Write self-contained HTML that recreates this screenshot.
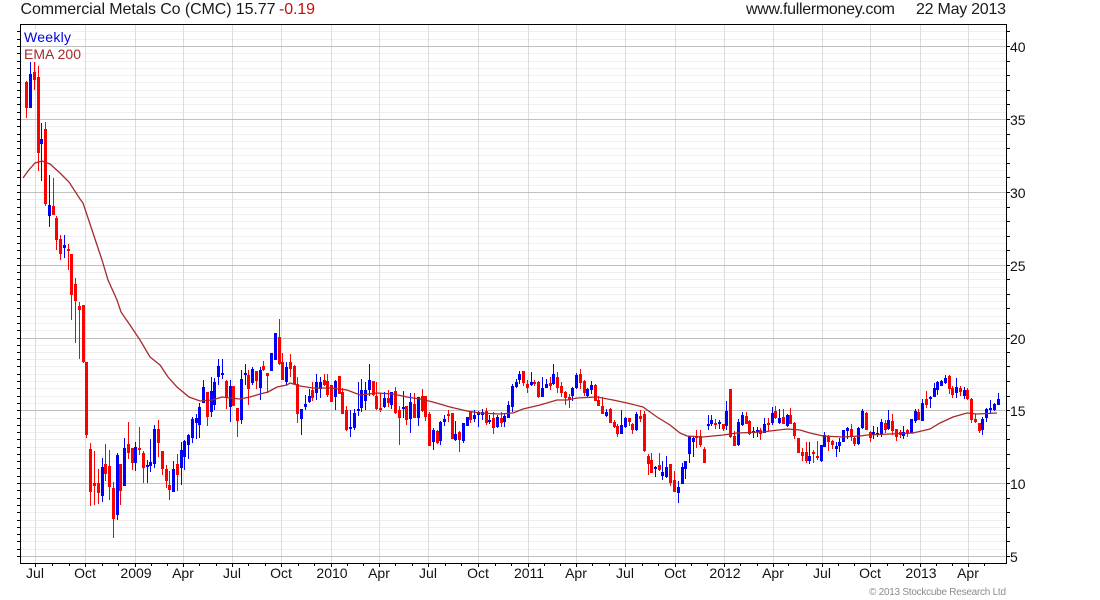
<!DOCTYPE html>
<html lang="en">
<head>
<meta charset="utf-8">
<title>Commercial Metals Co (CMC)</title>
<style>
html,body{margin:0;padding:0;background:#fff;width:1100px;height:600px;overflow:hidden}
svg{display:block;font-family:"Liberation Sans",Arial,sans-serif}
</style>
</head>
<body>
<svg width="1100" height="600" viewBox="0 0 1100 600" xmlns="http://www.w3.org/2000/svg">
<!-- grid -->
<g shape-rendering="crispEdges" fill="none" transform="translate(0,.5)">
<path stroke="#efefef" d="M21 549H1006M21 541H1006M21 534H1006M21 527H1006M21 520H1006M21 512H1006M21 505H1006M21 498H1006M21 490H1006M21 476H1006M21 468H1006M21 461H1006M21 454H1006M21 447H1006M21 439H1006M21 432H1006M21 425H1006M21 418H1006M21 403H1006M21 396H1006M21 388H1006M21 381H1006M21 374H1006M21 366H1006M21 359H1006M21 352H1006M21 345H1006M21 330H1006M21 323H1006M21 316H1006M21 308H1006M21 301H1006M21 294H1006M21 287H1006M21 279H1006M21 272H1006M21 258H1006M21 250H1006M21 243H1006M21 236H1006M21 228H1006M21 221H1006M21 214H1006M21 207H1006M21 199H1006M21 185H1006M21 177H1006M21 170H1006M21 163H1006M21 155H1006M21 148H1006M21 141H1006M21 134H1006M21 126H1006M21 112H1006M21 104H1006M21 97H1006M21 90H1006M21 82H1006M21 75H1006M21 68H1006M21 61H1006M21 53H1006M21 39H1006M21 31H1006"/>
</g>
<g shape-rendering="crispEdges" fill="none" transform="translate(.5,0)">
<path stroke="#dcdcdc" d="M35 25V563M85 25V563M135 25V563M183 25V563M232 25V563M281 25V563M331 25V563M379 25V563M428 25V563M478 25V563M528 25V563M576 25V563M625 25V563M675 25V563M724 25V563M773 25V563M822 25V563M870 25V563M920 25V563M968 25V563"/>
</g>
<g shape-rendering="crispEdges" fill="none" transform="translate(0,.5)">
<path stroke="#c0c0c0" d="M21 556H1006M21 483H1006M21 410H1006M21 338H1006M21 265H1006M21 192H1006M21 119H1006M21 46H1006"/>
</g>
<!-- legend backgrounds -->
<rect x="21" y="29" width="52" height="16" fill="#fff"/>
<rect x="21" y="47" width="61" height="15" fill="#fff"/>
<!-- candles -->
<g shape-rendering="crispEdges" fill="none" transform="translate(.5,0)">
<path stroke="#ff0000" stroke-width="1" d="M26 81V118M34 62V90M38 66V171M45 122V206M53 178V215M56 216V250M60 235V260M68 244V270M71 254V320M75 278V343M79 302V359M83 305V363M86 362V438M90 443V506M94 451V505M98 469V504M105 444V481M109 450V500M113 482V538M120 464V505M128 422V459M132 448V470M139 427V455M143 451V483M158 420V457M162 451V475M166 465V488M169 471V500M177 454V491M207 392V426M226 380V409M233 386V406M237 408V437M248 370V405M256 371V389M263 361V371M267 373V393M279 319V365M282 353V380M290 354V377M294 365V385M297 377V423M312 382V401M324 374V386M327 374V397M331 385V402M339 376V394M342 388V414M346 406V431M373 381V396M376 382V410M380 393V412M388 390V407M395 387V414M399 406V445M406 406V425M414 393V418M422 389V412M425 396V421M429 412V446M437 430V444M448 410V422M452 413V439M459 431V452M470 411V423M486 408V425M493 412V434M501 412V427M523 371V386M527 380V393M534 380V386M538 381V398M550 377V390M557 372V393M561 382V397M565 391V405M569 394V408M580 369V389M584 380V396M595 384V401M598 396V406M602 397V414M610 408V423M614 420V428M617 424V437M629 418V426M632 423V434M640 410V422M644 411V452M648 454V475M651 453V473M659 453V471M670 464V486M674 471V492M696 430V448M700 430V447M704 447V463M715 419V429M723 424V431M730 389V438M734 431V446M746 412V424M749 420V435M760 428V440M768 418V431M775 406V419M783 409V424M790 408V424M794 422V439M798 438V453M802 448V461M806 442V463M813 450V463M817 441V460M828 435V451M832 440V449M851 424V441M854 436V446M866 412V430M870 431V442M885 420V433M892 414V435M896 429V441M900 430V438M907 429V437M918 409V420M926 391V408M949 375V394M952 386V398M960 386V396M967 388V400M971 398V423M975 414V423M979 423V433"/>
<path stroke="#ff0000" stroke-width="3" d="M26 82V108M34 72V80M38 77V153M45 129V204M53 206V215M56 218V240M60 239V254M68 249V251M71 254V295M75 284V301M79 306V310M83 305V362M86 362V435M90 449V492M94 483V486M98 483V493M105 464V474M109 466V487M113 488V519M120 464V491M128 444V453M132 448V463M139 448V450M143 453V468M158 429V443M162 451V469M166 469V481M169 485V490M177 464V475M207 392V417M226 381V397M233 386V406M237 408V421M248 375V389M256 371V381M263 366V370M267 373V376M279 337V364M282 362V380M290 362V369M294 366V384M297 384V414M312 390V398M324 380V385M327 381V395M331 385V402M339 376V394M342 392V414M346 410V430M373 381V395M376 396V409M380 408V410M388 398V403M395 391V413M399 410V418M406 406V420M414 404V418M422 396V411M425 396V417M429 414V446M437 431V443M448 414V416M452 413V439M459 432V440M470 412V420M486 411V423M493 418V428M501 418V423M523 371V383M527 384V388M534 382V384M538 382V397M550 383V386M557 377V388M561 386V393M565 392V398M569 397V400M580 374V383M584 381V393M595 385V401M598 400V406M602 406V414M610 409V423M614 422V427M617 426V434M629 418V422M632 424V430M640 416V419M644 414V451M648 456V464M651 460V473M659 465V470M670 464V483M674 480V492M696 436V438M700 436V445M704 449V463M715 423V425M723 424V429M730 389V437M734 436V446M746 416V424M749 421V434M760 430V434M768 423V425M775 411V418M783 417V424M790 415V424M794 423V436M798 438V453M802 452V456M806 452V461M813 452V454M817 456V458M828 436V442M832 441V445M851 429V437M854 438V444M866 413V430M870 432V438M885 423V430M892 421V431M896 429V437M900 432V435M907 430V433M918 412V420M926 399V405M949 376V389M952 388V395M960 388V392M967 390V399M971 399V420M975 419V422M979 423V431"/>
<path stroke="#0000ff" stroke-width="1" d="M30 62V108M41 123V181M49 175V227M64 235V258M102 458V502M117 453V520M124 438V486M135 442V471M147 460V483M150 439V472M154 425V468M173 461V492M181 442V485M184 440V470M188 434V459M192 417V443M196 414V439M199 403V438M203 380V403M211 377V417M214 378V410M218 359V385M222 359V379M230 380V422M241 370V424M245 364V385M252 367V385M260 367V400M271 353V371M275 333V360M286 362V385M301 409V435M305 395V410M309 389V403M316 374V400M320 377V398M335 380V410M350 410V437M354 409V430M358 382V416M361 379V412M365 382V410M369 364V396M384 392V408M391 392V409M403 391V418M410 393V433M418 397V426M433 428V450M440 421V445M444 415V426M455 421V441M463 423V443M467 417V426M474 410V422M478 411V427M482 409V420M489 415V424M497 415V428M504 414V427M508 401V418M512 384V412M516 379V388M519 371V384M531 372V386M542 377V397M546 379V388M553 364V385M572 387V401M576 373V389M587 388V397M591 381V394M606 409V417M621 410V434M625 417V428M636 412V431M655 466V477M662 461V480M666 456V478M678 481V503M682 463V484M685 461V479M689 436V463M693 436V457M708 415V430M711 415V426M719 420V429M726 401V430M738 419V446M742 412V426M753 427V438M757 427V437M764 418V433M772 407V425M779 409V424M787 414V427M809 442V464M821 445V462M824 432V447M836 442V457M839 438V452M843 430V442M847 427V439M858 427V445M862 409V429M873 426V439M877 427V437M881 419V437M888 410V430M903 426V439M911 419V433M915 409V423M922 399V421M930 396V408M934 383V397M937 381V395M941 380V386M945 375V384M956 378V398M964 387V399M982 417V435M986 408V422M990 400V414M994 403V411M998 393V405"/>
<path stroke="#0000ff" stroke-width="3" d="M30 74V108M41 139V144M49 205V216M64 245V248M102 467V496M117 455V515M124 448V486M135 447V463M147 465V467M150 462V466M154 429V464M173 469V492M181 450V468M184 441V457M188 435V445M192 419V438M196 418V423M199 407V425M203 387V403M211 391V412M214 382V405M218 366V377M222 373V375M230 386V407M241 379V420M245 373V375M252 369V383M260 370V388M271 353V371M275 333V360M286 367V382M301 409V419M305 404V407M309 396V402M316 382V393M320 382V389M335 381V397M350 427V429M354 413V428M358 409V411M361 390V408M365 390V401M369 380V390M384 398V407M391 392V405M403 407V409M410 402V419M418 397V418M433 430V442M440 422V441M444 419V422M455 434V440M463 423V441M467 417V426M474 415V419M478 412V415M482 412V415M489 420V422M497 417V427M504 416V422M508 405V418M512 386V407M516 382V387M519 374V380M531 382V385M542 388V397M546 384V388M553 374V384M572 388V396M576 375V388M587 389V396M591 385V390M606 412V416M621 425V434M625 418V427M636 414V430M655 467V469M662 472V476M666 467V477M678 487V493M682 467V484M685 461V469M689 436V454M693 438V442M708 424V426M711 420V424M719 422V424M726 411V426M738 422V445M742 415V425M753 431V433M757 430V432M764 424V433M772 413V423M779 418V423M787 415V426M809 456V461M821 445V461M824 435V447M836 446V449M839 442V446M843 430V442M847 428V431M858 428V444M862 411V428M873 432V435M877 433V435M881 422V434M888 420V429M903 432V436M911 419V433M915 411V421M922 403V421M930 397V399M934 388V397M937 382V390M941 381V386M945 378V383M956 387V393M964 390V396M982 419V430M986 409V418M990 408V410M994 404V410M998 399V405"/>
</g>
<!-- EMA 200 -->
<polyline fill="none" stroke="#a52a2a" stroke-width="1.3" points="23,178 28,171 35,163 42,161 50,164 60,173 69,182 80,199 83,203 92,230 102,260 108,280 117,300 121,312 130,325 140,340 150,357 160,365 168,377 177,387 189,397 200,401 212,400 222,397 230,398 240,399 250,397 260,394 268,392 277,387 287,385 290,383 300,386 313,388 330,388 347,390 360,395 377,393 393,394 407,397 420,399 433,402 450,407 467,411 480,413 500,414 513,413 523,409 540,405 557,400 567,400 577,398 597,397 613,400 627,403 643,407 657,417 670,425 680,433 687,436 703,437 723,435 737,433 763,432 770,431 787,429 800,430 810,433 823,436 843,437 860,436 867,435 890,434 913,433 930,429 940,423 953,417 967,413 977,414 997,413"/>
<!-- axes -->
<g shape-rendering="crispEdges" fill="none" stroke="#000">
<rect x="20.5" y="24.5" width="986" height="539"/>
<g transform="translate(0,.5)">
<path d="M17 549H20M17 541H20M17 534H20M17 527H20M17 520H20M17 512H20M17 505H20M17 498H20M17 490H20M17 476H20M17 468H20M17 461H20M17 454H20M17 447H20M17 439H20M17 432H20M17 425H20M17 418H20M17 403H20M17 396H20M17 388H20M17 381H20M17 374H20M17 366H20M17 359H20M17 352H20M17 345H20M17 330H20M17 323H20M17 316H20M17 308H20M17 301H20M17 294H20M17 287H20M17 279H20M17 272H20M17 258H20M17 250H20M17 243H20M17 236H20M17 228H20M17 221H20M17 214H20M17 207H20M17 199H20M17 185H20M17 177H20M17 170H20M17 163H20M17 155H20M17 148H20M17 141H20M17 134H20M17 126H20M17 112H20M17 104H20M17 97H20M17 90H20M17 82H20M17 75H20M17 68H20M17 61H20M17 53H20M17 39H20M17 31H20M17 556H20M17 483H20M17 410H20M17 338H20M17 265H20M17 192H20M17 119H20M17 46H20"/>
<path d="M1007 556H1010M1007 541H1010M1007 527H1010M1007 512H1010M1007 498H1010M1007 483H1010M1007 468H1010M1007 454H1010M1007 439H1010M1007 425H1010M1007 410H1010M1007 396H1010M1007 381H1010M1007 366H1010M1007 352H1010M1007 338H1010M1007 323H1010M1007 308H1010M1007 294H1010M1007 279H1010M1007 265H1010M1007 250H1010M1007 236H1010M1007 221H1010M1007 207H1010M1007 192H1010M1007 177H1010M1007 163H1010M1007 148H1010M1007 134H1010M1007 119H1010M1007 104H1010M1007 90H1010M1007 75H1010M1007 61H1010M1007 46H1010M1007 31H1010"/>
</g>
<g transform="translate(.5,0)">
<path d="M35 564V567M85 564V567M135 564V567M183 564V567M232 564V567M281 564V567M331 564V567M379 564V567M428 564V567M478 564V567M528 564V567M576 564V567M625 564V567M675 564V567M724 564V567M773 564V567M822 564V567M870 564V567M920 564V567M968 564V567"/>
<path d="M52 564V566M69 564V566M102 564V566M118 564V566M151 564V566M167 564V566M199 564V566M216 564V566M248 564V566M265 564V566M298 564V566M314 564V566M347 564V566M363 564V566M395 564V566M412 564V566M445 564V566M461 564V566M495 564V566M511 564V566M544 564V566M560 564V566M592 564V566M609 564V566M642 564V566M658 564V566M691 564V566M707 564V566M740 564V566M757 564V566M788 564V566M806 564V566M838 564V566M854 564V566M887 564V566M903 564V566M936 564V566M952 564V566M984 564V566"/>
</g>
</g>
<!-- header text -->
<text x="20.5" y="14" font-size="16" fill="#1a1a1a" textLength="255" lengthAdjust="spacing">Commercial Metals Co (CMC) 15.77</text>
<text x="279" y="14" font-size="16" fill="#c01010" textLength="36" lengthAdjust="spacing">-0.19</text>
<text x="746" y="14" font-size="16" fill="#1a1a1a" textLength="149" lengthAdjust="spacing">www.fullermoney.com</text>
<text x="916" y="14" font-size="16" fill="#1a1a1a" textLength="90" lengthAdjust="spacing">22 May 2013</text>
<!-- legend -->
<text x="24" y="42" font-size="14" fill="#0000e0" textLength="47" lengthAdjust="spacing">Weekly</text>
<text x="24" y="59" font-size="14" fill="#a52a2a" textLength="57" lengthAdjust="spacing">EMA 200</text>
<!-- y labels -->
<g font-size="14" fill="#111">
<text x="1010" y="52">40</text>
<text x="1010" y="125">35</text>
<text x="1010" y="198">30</text>
<text x="1010" y="271">25</text>
<text x="1010" y="344">20</text>
<text x="1010" y="416">15</text>
<text x="1010" y="489">10</text>
<text x="1010" y="562">5</text>
</g>
<!-- x labels -->
<g font-size="14" fill="#111" text-anchor="middle">
<text x="35" y="578">Jul</text>
<text x="85" y="578">Oct</text>
<text x="136" y="578">2009</text>
<text x="183" y="578">Apr</text>
<text x="232" y="578">Jul</text>
<text x="281" y="578">Oct</text>
<text x="332" y="578">2010</text>
<text x="379" y="578">Apr</text>
<text x="428" y="578">Jul</text>
<text x="478" y="578">Oct</text>
<text x="529" y="578">2011</text>
<text x="576" y="578">Apr</text>
<text x="625" y="578">Jul</text>
<text x="675" y="578">Oct</text>
<text x="725" y="578">2012</text>
<text x="773" y="578">Apr</text>
<text x="822" y="578">Jul</text>
<text x="870" y="578">Oct</text>
<text x="921" y="578">2013</text>
<text x="968" y="578">Apr</text>
</g>
<text x="869" y="595" font-size="10" fill="#8c8c8c" textLength="137" lengthAdjust="spacing">© 2013 Stockcube Research Ltd</text>
</svg>
</body>
</html>
